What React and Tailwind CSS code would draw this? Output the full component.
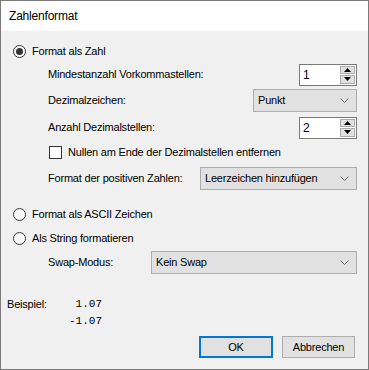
import React from "react";

const font = { fontFamily: '"Liberation Sans", Arial, sans-serif' };

const txt = "text-[11px] tracking-[-0.2px] text-black whitespace-nowrap";

const Radio = ({ checked, label }) => (
  <div className="flex items-center h-[20px] pl-[12px]">
    <span className="w-[13px] h-[13px] rounded-full border border-[#333333] bg-white flex items-center justify-center">
      {checked && <span className="w-[7px] h-[7px] rounded-full bg-[#333333]" />}
    </span>
    <span className={`ml-[6px] ${txt}`}>{label}</span>
  </div>
);

const SpinBox = ({ value }) => (
  <div className="w-[58px] h-[22px] bg-white border border-[#7a7a7a] flex items-center">
    <span className={`flex-1 pl-[3px] ${txt} text-[12px]`}>{value}</span>
    <div className="flex flex-col w-[15px] h-[18px] mr-[1px] gap-[1px]">
      <div className="flex-1 bg-[#e1e1e1] border border-[#adadad] flex items-center justify-center">
        <svg width="7" height="4" viewBox="0 0 7 4">
          <path d="M0 4 L3.5 0 L7 4 Z" fill="#000" />
        </svg>
      </div>
      <div className="flex-1 bg-[#e1e1e1] border border-[#adadad] flex items-center justify-center">
        <svg width="7" height="4" viewBox="0 0 7 4">
          <path d="M0 0 L3.5 4 L7 0 Z" fill="#000" />
        </svg>
      </div>
    </div>
  </div>
);

const Dropdown = ({ value, className }) => (
  <div className={`h-[23px] bg-[#e1e1e1] border border-[#adadad] flex items-center ${className}`}>
    <span className={`flex-1 pl-[4px] ${txt}`}>{value}</span>
    <svg width="9" height="5" viewBox="0 0 9 5" className="mr-[7px]">
      <path d="M0.5 0.5 L4.5 4.5 L8.5 0.5" fill="none" stroke="#666" strokeWidth="1" />
    </svg>
  </div>
);

const LabelRow = ({ label, children, mt }) => (
  <div className={`flex items-center justify-between h-[23px] pl-[47px] pr-[11px] ${mt}`}>
    <span className={txt}>{label}</span>
    {children}
  </div>
);

export default function App() {
  return (
    <div
      className="w-[369px] h-[370px] border border-[#7a7a7a] bg-[#f0f0f0] flex flex-col"
      style={font}
    >
      {/* Title bar */}
      <div className={`h-[30px] bg-white flex items-center pl-[8px] ${txt} text-[12px]`}>
        Zahlenformat
      </div>

      <div className="mt-[10px]">
        <Radio checked label="Format als Zahl" />
      </div>

      <LabelRow label="Mindestanzahl Vorkommastellen:" mt="mt-[2px]">
        <SpinBox value="1" />
      </LabelRow>

      <LabelRow label="Dezimalzeichen:" mt="mt-[3px]">
        <Dropdown value="Punkt" className="w-[104px]" />
      </LabelRow>

      <LabelRow label="Anzahl Dezimalstellen:" mt="mt-[4px]">
        <SpinBox value="2" />
      </LabelRow>

      <div className="flex items-center h-[20px] mt-[3px] pl-[48px]">
        <span className="w-[13px] h-[13px] border border-[#333333] bg-white" />
        <span className={`ml-[6px] ${txt}`}>
          Nullen am Ende der Dezimalstellen entfernen
        </span>
      </div>

      <div className="flex items-center h-[23px] mt-[5px] pl-[47px]">
        <span className={`w-[152px] ${txt}`}>Format der positiven Zahlen:</span>
        <Dropdown value="Leerzeichen hinzufügen" className="w-[157px]" />
      </div>

      <div className="mt-[14px]">
        <Radio label="Format als ASCII Zeichen" />
      </div>
      <div className="mt-[4px]">
        <Radio label="Als String formatieren" />
      </div>

      <div className="flex items-center h-[23px] mt-[3px] pl-[47px]">
        <span className={`w-[103px] ${txt}`}>Swap-Modus:</span>
        <Dropdown value="Kein Swap" className="w-[206px]" />
      </div>

      {/* Example */}
      <div className="flex mt-[22px] pl-[6px]">
        <span className={`w-[54px] h-[17px] flex items-center ${txt}`}>Beispiel:</span>
        <div
          className="flex flex-col items-end w-[41px] text-[11px] text-black leading-[17px]"
          style={{ fontFamily: '"Liberation Mono", "Courier New", monospace' }}
        >
          <span>1.07</span>
          <span>-1.07</span>
        </div>
      </div>

      {/* Buttons */}
      <div className="flex justify-end gap-[9px] mt-[6px] pr-[13px]">
        <button className={`w-[74px] h-[22px] bg-[#e1e1e1] border-2 border-[#0078d7] ${txt}`}>
          OK
        </button>
        <button className={`w-[73px] h-[22px] bg-[#e1e1e1] border border-[#adadad] ${txt}`}>
          Abbrechen
        </button>
      </div>
    </div>
  );
}
